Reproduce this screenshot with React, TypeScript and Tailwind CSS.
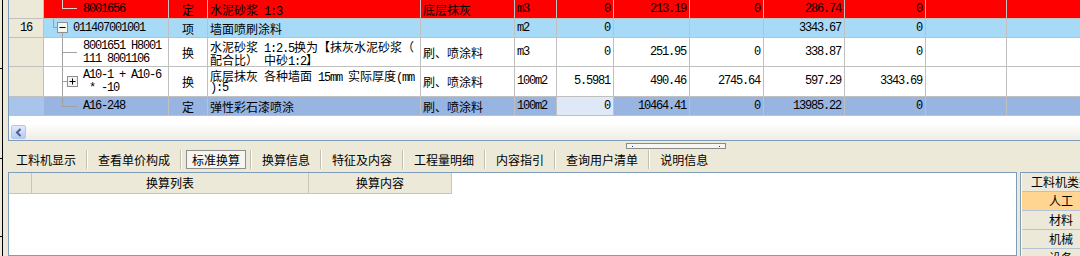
import React from 'react';

const MONO = "font-['Liberation_Mono',monospace] tracking-[-1.2px]";

// ascii runs in mono (SimSun-like half width), the rest in CJK
const T = ({ s }: { s: string }) => (
  <>
    {s.split(/([\x20-\x7e]+)/).map((part, i) =>
      part === '' ? null : /^[\x20-\x7e]+$/.test(part) ? (
        <span key={i} className={MONO}>{part}</span>
      ) : (
        <span key={i}>{part}</span>
      )
    )}
  </>
);

// one fixed-height box per line so mixed fonts don't stretch the rows
const Lines = ({ s }: { s: string }) => (
  <div className="flex flex-col">
    {s.split('\n').map((l, i) => (
      <div key={i} className="h-[13px] flex items-baseline whitespace-pre leading-[13px]">
        <T s={l} />
      </div>
    ))}
  </div>
);

const colW = [
  'w-[35px]', 'w-[125px]', 'w-[39px]', 'w-[213px]', 'w-[94px]', 'w-[42px]',
  'w-[57px]', 'w-[76px]', 'w-[74px]', 'w-[81px]', 'w-[81px]', 'w-[81px]', 'w-[81px]',
];

const TreeBox = ({ plus, className }: { plus?: boolean; className: string }) => (
  <svg width="11" height="11" viewBox="0 0 11 11" className={`absolute ${className}`}>
    <rect x="0.5" y="0.5" width="10" height="10" fill="#f4f4f0" stroke="#8f8f8f" />
    <line x1="2.5" y1="5.5" x2="8.5" y2="5.5" stroke="#000" />
    {plus && <line x1="5.5" y1="2.5" x2="5.5" y2="8.5" stroke="#000" />}
  </svg>
);

interface GridRow {
  h: string;
  bg: string;
  numBg: string;
  num?: string;
  multi?: boolean;
  tree: React.ReactNode;
  codePad: string;
  code: string;
  type: string;
  name: string;
  feat: string;
  unit: string;
  vals: string[];
  qtyBg?: string;
}

const rows: GridRow[] = [
  {
    h: 'h-[19px]',
    bg: 'bg-[#ff0000]',
    numBg: 'bg-[#ece9d8]',
    tree: (
      <>
        <span className="absolute left-[18px] top-0 h-[9px] w-px bg-[#d0d0d0]" />
        <span className="absolute left-[18px] top-[8px] h-px w-[15px] bg-[#d0d0d0]" />
      </>
    ),
    codePad: 'pl-[39px]',
    code: '8001656',
    type: '定',
    name: '水泥砂浆 1:3',
    feat: '底层抹灰',
    unit: 'm3',
    vals: ['0', '213.19', '0', '286.74', '0', '', ''],
  },
  {
    h: 'h-[19px]',
    bg: 'bg-[#a7daf7]',
    numBg: 'bg-[#ece9d8]',
    num: '16',
    tree: (
      <>
        <span className="absolute left-[9px] top-0 h-[9px] w-px bg-[#a0a0a0]" />
        <span className="absolute left-[9px] top-[8px] h-px w-[4px] bg-[#a0a0a0]" />
        <TreeBox className="left-[13px] top-[3px]" />
        <span className="absolute left-[18px] top-[14px] -bottom-px w-px bg-[#a0a0a0]" />
      </>
    ),
    codePad: 'pl-[29px]',
    code: '011407001001',
    type: '项',
    name: '墙面喷刷涂料',
    feat: '',
    unit: 'm2',
    vals: ['0', '', '', '3343.67', '0', '', ''],
  },
  {
    h: 'h-[29px]',
    bg: 'bg-white',
    numBg: 'bg-[#ece9d8]',
    multi: true,
    tree: (
      <>
        <span className="absolute left-[18px] top-0 -bottom-px w-px bg-[#a0a0a0]" />
        <span className="absolute left-[18px] top-[14px] h-px w-[15px] bg-[#a0a0a0]" />
      </>
    ),
    codePad: 'pl-[39px]',
    code: '8001651 H8001\n111 8001106',
    type: '换',
    name: '水泥砂浆 1:2.5换为【抹灰水泥砂浆（\n配合比） 中砂1:2】',
    feat: '刷、喷涂料',
    unit: 'm3',
    vals: ['0', '251.95', '0', '338.87', '0', '', ''],
  },
  {
    h: 'h-[30px]',
    bg: 'bg-white',
    numBg: 'bg-[#ece9d8]',
    multi: true,
    tree: (
      <>
        <span className="absolute left-[18px] top-0 -bottom-px w-px bg-[#a0a0a0]" />
        <span className="absolute left-[18px] top-[14px] h-px w-[5px] bg-[#a0a0a0]" />
        <TreeBox plus className="left-[23px] top-[9px]" />
      </>
    ),
    codePad: 'pl-[39px]',
    code: 'A10-1 + A10-6\n * -10',
    type: '换',
    name: '底层抹灰 各种墙面 15mm 实际厚度(mm\n):5',
    feat: '刷、喷涂料',
    unit: '100m2',
    vals: ['5.5981', '490.46', '2745.64', '597.29', '3343.69', '', ''],
  },
  {
    h: 'h-[19px]',
    bg: 'bg-[#98b5e1]',
    numBg: 'bg-[#a8c4ea]',
    tree: (
      <>
        <span className="absolute left-[18px] top-0 h-[10px] w-px bg-[#a0a0a0]" />
        <span className="absolute left-[18px] top-[9px] h-px w-[15px] bg-[#a0a0a0]" />
      </>
    ),
    codePad: 'pl-[39px]',
    code: 'A16-248',
    type: '定',
    name: '弹性彩石漆喷涂',
    feat: '刷、喷涂料',
    unit: '100m2',
    vals: ['0', '10464.41', '0', '13985.22', '0', '', ''],
    qtyBg: 'bg-[#dfe8f6]',
  },
];

const cellBase = 'shrink-0 flex overflow-hidden border-r border-b border-[#c0c0c0]';

const GridRowView = ({ r }: { r: GridRow }) => {
  const top = r.multi ? 'items-start pt-[2px]' : 'items-center';
  return (
    <div className={`flex ${r.h}`}>
      <div className={`${colW[0]} ${cellBase} ${r.numBg} items-center justify-center`}>
        {r.num && <Lines s={r.num} />}
      </div>
      <div className={`${colW[1]} ${cellBase} ${r.bg} relative ${top} ${r.codePad}`}>
        {r.tree}
        <Lines s={r.code} />
      </div>
      <div className={`${colW[2]} ${cellBase} ${r.bg} items-center justify-center`}>
        <Lines s={r.type} />
      </div>
      <div className={`${colW[3]} ${cellBase} ${r.bg} ${top} pl-[2px]`}>
        <Lines s={r.name} />
      </div>
      <div className={`${colW[4]} ${cellBase} ${r.bg} items-center pl-[2px]`}>
        <Lines s={r.feat} />
      </div>
      <div className={`${colW[5]} ${cellBase} ${r.bg} items-center pl-[2px]`}>
        <Lines s={r.unit} />
      </div>
      {r.vals.map((v, i) => (
        <div
          key={i}
          className={`${colW[6 + i]} ${cellBase} ${i === 0 && r.qtyBg ? r.qtyBg : r.bg} items-center justify-end pr-[3px]`}
        >
          <Lines s={v} />
        </div>
      ))}
    </div>
  );
};

const tabs = ['工料机显示', '查看单价构成', '标准换算', '换算信息', '特征及内容', '工程量明细', '内容指引', '查询用户清单', '说明信息'];

const TabBar = () => (
  <div className="relative h-[31px] shrink-0 flex items-start gap-[10px] pl-[8px] pt-[9px]">
    {tabs.map((t, i) => (
      <React.Fragment key={t}>
        {i > 0 && <span className="h-[19px] w-[2px] border-x border-l-[#c3c0b0] border-r-white" />}
        {i === 2 ? (
          <span className="-mx-[6px] px-[5px] h-[19px] flex items-center border border-[#8e8e8e] bg-[#f6f5f0]">{t}</span>
        ) : (
          <span className="h-[19px] flex items-center">{t}</span>
        )}
      </React.Fragment>
    ))}
    {/* splitter grip */}
    <div className="absolute left-[618px] top-[2px] w-[100px] h-[6px] border border-[#8a8a8a] bg-[#f7f6f2] flex items-center justify-between px-[5px]">
      <span className="w-px h-px bg-[#1a2a8a]" />
      <span className="w-px h-px bg-[#1a2a8a]" />
    </div>
  </div>
);

const sideList = ['工料机类别', '人工', '材料', '机械', '设备'];

export default function App() {
  return (
    <div className="w-[1080px] h-[256px] overflow-hidden bg-[#ece9d8] flex text-[12px] text-black font-['Noto_Sans_CJK_SC',sans-serif]">
      {/* left edge of the neighbouring window */}
      <svg width="8" height="256" className="shrink-0">
        <line x1="2.5" y1="0" x2="2.5" y2="256" stroke="#000" />
        <line x1="0" y1="68.5" x2="3" y2="68.5" stroke="#000" />
        <line x1="0" y1="158.5" x2="3" y2="158.5" stroke="#000" />
        <line x1="0" y1="236.5" x2="3" y2="236.5" stroke="#000" />
      </svg>

      <div className="flex-1 min-w-0 flex flex-col">
        {/* grid */}
        <div className="h-[141px] shrink-0 flex flex-col border-l border-b border-[#7f9db9] bg-white overflow-hidden">
          <div className="flex flex-col">
            {rows.map((r, i) => (
              <GridRowView key={i} r={r} />
            ))}
          </div>
          <div className="h-[7px] shrink-0" />
          <div className="h-[17px] shrink-0 bg-gradient-to-b from-white to-[#efede4] pl-[2px] pt-[2px]">
            <div className="w-[15px] h-[14px] rounded-[2px] border border-[#b4c6ee] bg-gradient-to-b from-[#e0e9fd] to-[#b8cbf5] flex items-center justify-center">
              <svg width="8" height="9" viewBox="0 0 8 9">
                <path d="M5.5 1 L2 4.5 L5.5 8" fill="none" stroke="#4d6185" strokeWidth="2" />
              </svg>
            </div>
          </div>
        </div>

        <TabBar />

        {/* lower panels */}
        <div className="flex-1 min-h-0 flex gap-[3px]">
          <div className="w-[1009px] shrink-0 border border-[#7f9db9] bg-white">
            <div className="flex h-[21px]">
              <div className="w-[23px] border-r border-b border-r-[#c8c5b6] border-b-[#bcc6d3] bg-[#ece9d8]" />
              <div className="w-[277px] border-r border-b border-r-[#c8c5b6] border-b-[#bcc6d3] bg-[#ece9d8] flex items-center justify-center">换算列表</div>
              <div className="w-[143px] border-r border-b border-r-[#c8c5b6] border-b-[#bcc6d3] bg-[#ece9d8] flex items-center justify-center">换算内容</div>
            </div>
          </div>
          <div className="flex-1 min-w-0 border-t border-l border-[#7f9db9] bg-white pl-px overflow-hidden">
            <div className="w-[78px] flex flex-col">
              {sideList.map((s, i) => (
                <div
                  key={s}
                  className={`h-[19px] shrink-0 flex items-center justify-center border-b border-[#b6c3d6] ${i === 1 ? 'bg-[#ffd591]' : 'bg-[#ece9d8]'}`}
                >
                  {s}
                </div>
              ))}
            </div>
          </div>
        </div>
      </div>
    </div>
  );
}
